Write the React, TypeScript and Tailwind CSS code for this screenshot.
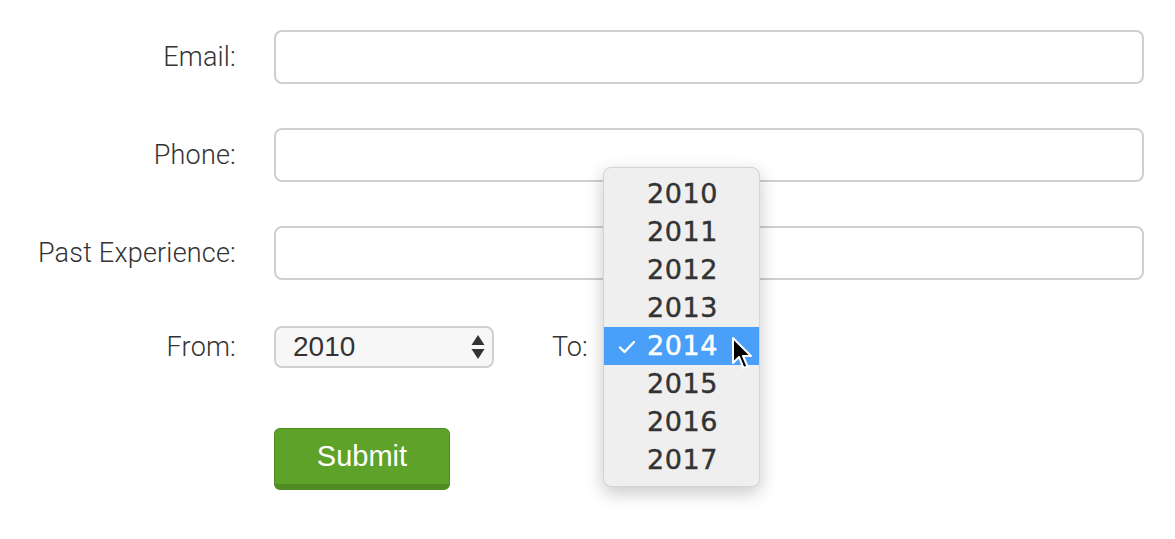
import React from 'react';

const years = [2010, 2011, 2012, 2013, 2014, 2015, 2016, 2017];

const Label = ({ children }: { children: React.ReactNode }) => (
  <div className="w-[236px] shrink-0 text-right text-[27px] font-light text-[#333] font-['Roboto',sans-serif] tracking-[0.2px]">
    {children}
  </div>
);

const TextRow = ({ label }: { label: string }) => (
  <div className="flex items-center gap-[38px]">
    <Label>{label}</Label>
    <input type="text" className="h-[54px] w-[870px] rounded-[8px] border-2 border-[#cfcfcf] bg-white outline-none" />
  </div>
);

export default function App() {
  return (
    <div className="relative h-[539px] w-[1175px] bg-white font-['Liberation_Sans',sans-serif]">
      <div className="flex flex-col pt-[30px]">
        <div className="flex flex-col gap-[44px]">
          <TextRow label="Email:" />
          <TextRow label="Phone:" />
          <TextRow label="Past Experience:" />
        </div>

        <div className="mt-[46px] flex items-center gap-[38px]">
          <Label>From:</Label>
          <div className="flex h-[42px] w-[220px] items-center justify-between rounded-[8px] border-2 border-[#d0d0d0] bg-[#f7f7f7] pl-[17px] pr-[6px]">
            <span className="text-[28px] text-[#333]">2010</span>
            <svg width="16" height="28" viewBox="0 0 16 28" className="text-[#333]">
              <path d="M8 2 L14.5 12 H1.5 Z" fill="currentColor" />
              <path d="M8 26 L14.5 16 H1.5 Z" fill="currentColor" />
            </svg>
          </div>
          <div className="ml-[20px] text-[27px] font-light text-[#333] font-['Roboto',sans-serif]">To:</div>
        </div>

        <div className="ml-[274px] mt-[60px]">
          <button className="h-[62px] w-[176px] rounded-[6px] border border-[#4f8c22] border-b-[6px] bg-[#5ea22a] text-[29px] text-white">
            Submit
          </button>
        </div>
      </div>

      {/* open year menu */}
      <div className="absolute left-[603px] top-[167px] w-[157px] rounded-[8px] border border-[#d4d4d4] bg-[#efefef] py-[7px] shadow-[0_6px_18px_rgba(0,0,0,0.22)] font-['DejaVu_Sans',sans-serif]">
        {years.map(y => (
          <div
            key={y}
            className={`relative flex h-[38px] items-center pl-[43px] text-[27px] tracking-[0.6px] [-webkit-text-stroke:0.4px_currentColor] ${y === 2014 ? 'bg-[#4a9ff8] text-white' : 'text-[#333]'}`}
          >
            {y === 2014 && (
              <svg width="18" height="14" viewBox="0 0 18 14" className="absolute left-[14px] top-[13px]">
                <path d="M2 7.5 L6.5 12 L16 2" fill="none" stroke="white" strokeWidth="2.4" strokeLinecap="round" strokeLinejoin="round" />
              </svg>
            )}
            {y}
          </div>
        ))}
      </div>

      {/* mouse pointer */}
      <svg width="24" height="36" viewBox="0 0 24 36" className="absolute left-[731px] top-[336px]">
        <path d="M2 2 L2 27 L8 21 L12.5 32 L16.5 30.5 L12 20 L20 20 Z" fill="black" stroke="white" strokeWidth="2" strokeLinejoin="round" />
      </svg>
    </div>
  );
}
